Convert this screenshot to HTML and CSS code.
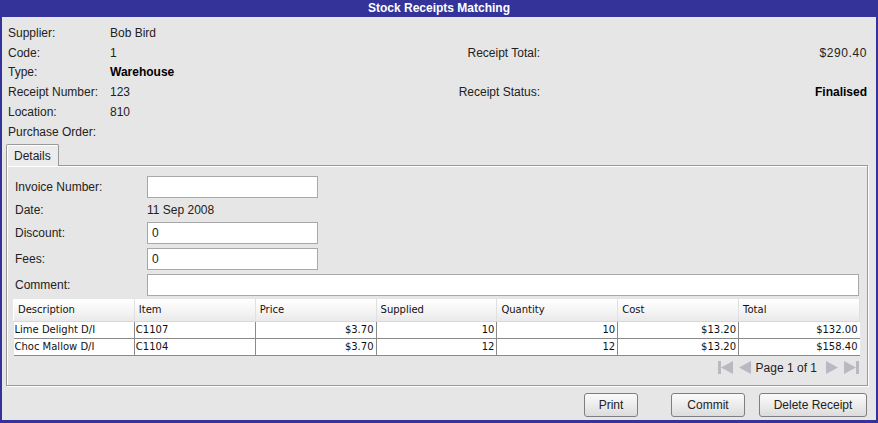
FILE: index.html
```html
<!DOCTYPE html>
<html>
<head>
<meta charset="utf-8">
<link rel="stylesheet" href="styles.css">
</head>
<body>
<div class="window">
  <div class="titlebar">Stock Receipts Matching</div>
  <div class="content">
    <div class="summary">
      <div class="lbl">Supplier:</div><div class="val">Bob Bird</div><div></div><div></div>
      <div class="lbl">Code:</div><div class="val">1</div><div class="lbl2">Receipt Total:</div><div class="val2 mono">$290.40</div>
      <div class="lbl">Type:</div><div class="val bold">Warehouse</div><div></div><div></div>
      <div class="lbl">Receipt Number:</div><div class="val">123</div><div class="lbl2">Receipt Status:</div><div class="val2 bold">Finalised</div>
      <div class="lbl">Location:</div><div class="val">810</div><div></div><div></div>
      <div class="lbl">Purchase Order:</div><div class="val"></div><div></div><div></div>
    </div>

    <div class="tabs">
      <div class="tab">Details</div>
    </div>
    <div class="panel">
      <div class="form">
        <div class="frow"><span class="flabel">Invoice Number:</span><span class="input"></span></div>
        <div class="frow short"><span class="flabel">Date:</span><span class="ftext">11 Sep 2008</span></div>
        <div class="frow"><span class="flabel">Discount:</span><span class="input">0</span></div>
        <div class="frow gap"><span class="flabel">Fees:</span><span class="input">0</span></div>
        <div class="frow gap"><span class="flabel">Comment:</span><span class="input wide"></span></div>
      </div>
      <table class="grid">
        <thead>
          <tr><th>Description</th><th>Item</th><th>Price</th><th>Supplied</th><th>Quantity</th><th>Cost</th><th>Total</th></tr>
        </thead>
        <tbody>
          <tr><td>Lime Delight D/I</td><td>C1107</td><td class="num">$3.70</td><td class="num">10</td><td class="num">10</td><td class="num">$13.20</td><td class="num">$132.00</td></tr>
          <tr><td>Choc Mallow D/I</td><td>C1104</td><td class="num">$3.70</td><td class="num">12</td><td class="num">12</td><td class="num">$13.20</td><td class="num">$158.40</td></tr>
        </tbody>
      </table>
      <div class="pager">
        <svg class="pico" width="16" height="13" viewBox="0 0 16 13"><rect x="0" y="0" width="3" height="13"/><polygon points="3,6.5 15,0 15,13"/></svg>
        <svg class="pico" width="13" height="13" viewBox="0 0 13 13"><polygon points="0,6.5 12,0 12,13"/></svg>
        <span class="ptext">Page 1 of 1</span>
        <svg class="pico" width="13" height="13" viewBox="0 0 13 13"><polygon points="13,6.5 1,0 1,13"/></svg>
        <svg class="pico" width="16" height="13" viewBox="0 0 16 13"><polygon points="13,6.5 1,0 1,13"/><rect x="13" y="0" width="3" height="13"/></svg>
      </div>
    </div>
    <div class="buttons">
      <button class="btn b-print">Print</button>
      <button class="btn b-commit">Commit</button>
      <button class="btn b-delete">Delete Receipt</button>
    </div>
  </div>
</div>
</body>
</html>
```
FILE: styles.css
```css
html, body {
  margin: 0;
  padding: 0;
  background: #ffffff;
}
body {
  font-family: "Liberation Sans", Arial, sans-serif;
  font-size: 12px;
  color: #1a1a1a;
}
.window {
  width: 878px;
  height: 423px;
  box-sizing: border-box;
  background: #333399;
  padding: 0 2px 3px 2px;
  display: flex;
  flex-direction: column;
}
.titlebar {
  height: 17px;
  line-height: 17px;
  text-align: center;
  color: #ffffff;
  font-weight: bold;
  font-size: 12px;
  flex: none;
}
.content {
  flex: 1;
  background: #e6e6e6;
  display: flex;
  flex-direction: column;
  padding: 0 0 0 4px;
}
.summary {
  display: grid;
  grid-template-columns: 102px 230px 200px 1fr;
  grid-auto-rows: 19.8px;
  padding: 6px 9px 0 2px;
  align-items: center;
}
.lbl { color: #222; }
.val { color: #222; }
.lbl2 { text-align: right; color: #222; }
.val2 { text-align: right; color: #222; }
.bold { font-weight: bold; color: #000; }
.mono { letter-spacing: 0.6px; }

.tabs {
  margin-top: 2px;
  height: 22px;
  display: flex;
  position: relative;
  z-index: 1;
}
.tab {
  width: 53px;
  height: 22px;
  box-sizing: border-box;
  border: 1px solid #999;
  border-bottom: none;
  border-radius: 2px 2px 0 0;
  background: #ececec;
  box-shadow: inset 1px 1px 0 #ffffff;
  padding-left: 7px;
  line-height: 22px;
  color: #222;
}
.panel {
  margin-top: -1px;
  width: 862px;
  height: 221px;
  box-sizing: border-box;
  border: 1px solid #999;
  box-shadow: inset 1px 1px 0 #ffffff, 1px 1px 0 #ffffff;
  background: #e6e6e6;
  padding: 10px 7px 0 6px;
}
.form {
  display: flex;
  flex-direction: column;
}
.frow {
  display: flex;
  align-items: center;
  height: 22px;
  margin-bottom: 2px;
}
.frow.short { height: 20px; }
.frow.gap { margin-top: 2px; }
.flabel {
  width: 132px;
  padding-left: 2px;
  color: #222;
}
.ftext { color: #222; }
.input {
  display: block;
  width: 171px;
  height: 22px;
  box-sizing: border-box;
  background: #ffffff;
  border: 1px solid #a8a8a8;
  padding: 0 4px;
  line-height: 20px;
  color: #222;
}
.input.wide { width: 712px; }

.grid {
  border-collapse: collapse;
  width: 847px;
  table-layout: fixed;
  margin-top: 1px;
  font-family: "DejaVu Sans", Verdana, sans-serif;
  font-size: 10px;
  color: #111;
}
.grid th {
  height: 22px;
  padding: 0 0 0 4px;
  text-align: left;
  font-weight: normal;
  background: linear-gradient(#ffffff, #f3f3f3 60%, #e9e9e9);
  border-left: 1px solid #ffffff;
  border-right: 1px solid #e0e0e0;
  border-bottom: 1px solid #d8d8d8;
}
.grid td {
  height: 16px;
  padding: 0 2px 0 1px;
  background: #ffffff;
  border: 1px solid #8a8a8a;
  border-top: none;
  white-space: nowrap;
}
.grid td:first-child { border-left: none; }
.grid td:last-child { border-right: none; }
.grid td.num { text-align: right; }

.pager {
  display: flex;
  justify-content: flex-end;
  align-items: center;
  height: 20px;
  padding-right: 1px;
  margin-top: 2px;
}
.pico { fill: #b9b9c2; margin-left: 5px; }
.ptext { margin: 0 3px 0 4px; color: #222; }

.buttons {
  display: flex;
  margin-top: 7px;
  padding-left: 578px;
}
.btn {
  height: 24px;
  box-sizing: border-box;
  border: 1px solid #7f7f7f;
  border-radius: 3px;
  background: linear-gradient(#fafafa, #ececec 50%, #dcdcdc);
  font-family: "Liberation Sans", Arial, sans-serif;
  font-size: 12px;
  color: #222;
  padding: 0;
}
.b-print { width: 54px; }
.b-commit { width: 74px; margin-left: 33px; }
.b-delete { width: 108px; margin-left: 14px; }
```
